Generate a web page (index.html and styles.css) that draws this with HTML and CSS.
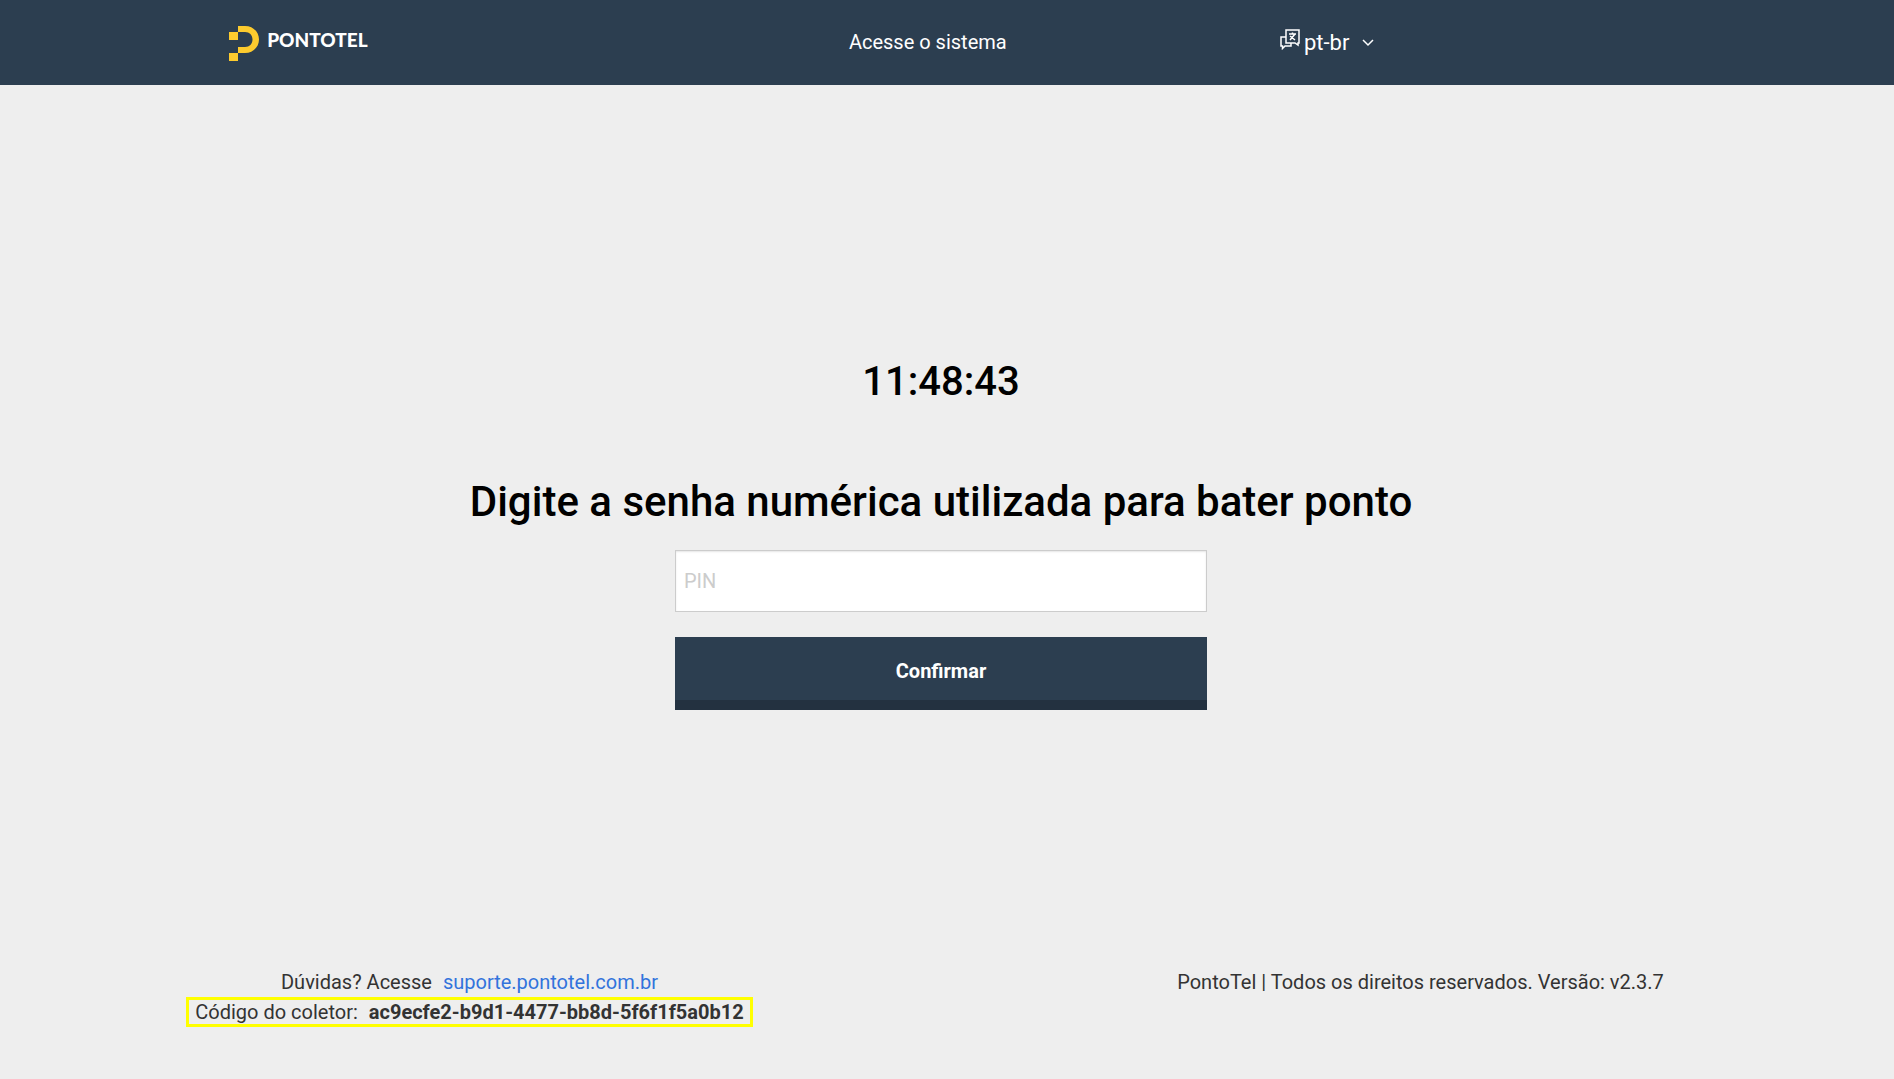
FILE: index.html
```html
<!DOCTYPE html>
<html lang="pt-br">
<head>
  <meta charset="UTF-8" />
  <meta name="viewport" content="width=device-width, initial-scale=1.0" />
  <title>PontoTel</title>
  <link rel="stylesheet" href="styles.css">
</head>
<body>
  <header class="header">
    <a href="#" class="brand" aria-label="Pontotel">
      <svg class="brand-mark" width="30" height="35" viewBox="0 0 30 35" fill="#fdcb2e" aria-hidden="true">
        <path d="M9 0h7c8 0 14 6 14 13.500S24 27 16 27H9v-6h7c4.500 0 7.500-3 7.500-7.500S20.500 6 16 6H9z" />
        <path d="M0 6h9v8H0zM0 27h9v8H0z" />
      </svg>
      <span class="brand-name">PONTOTEL</span>
    </a>
    <nav class="nav">
      <a href="#" class="nav-link">Acesse o sistema</a>
    </nav>
    <div class="language">
      <svg class="language-icon" width="20" height="21" viewBox="0 0 20 21" fill="none" stroke="#fff" stroke-width="1.500" aria-hidden="true">
        <path d="M6 1h13v13h-1v2l-3-2H6z" />
        <path d="M6 8H1v9h1.500v2.500L5 17h6v-3" />
        <path d="M9 5h7M12.500 3.500V5M10 11l5-6M10 7l5 4" />
      </svg>
      <select class="language-select" aria-label="Idioma">
        <option value="pt-br">pt-br</option>
        <option value="en">en</option>
        <option value="es">es</option>
      </select>
      <svg class="language-arrow" width="12" height="8" viewBox="0 0 12 8" fill="none" stroke="#fff" stroke-width="1.500" aria-hidden="true">
        <path d="M1 1l5 5 5-5" />
      </svg>
    </div>
  </header>
  <main class="main">
    <p class="clock">11:48:43</p>
    <form class="pin-form">
      <label for="pin" class="title">Digite a senha numérica utilizada para bater ponto</label>
      <input type="password" class="pin-input" id="pin" placeholder="PIN" inputmode="numeric" />
      <button type="submit" class="confirm-button">Confirmar</button>
    </form>
  </main>
  <footer class="footer">
    <div class="footer-col">
      <p>Dúvidas? Acesse <a href="#" class="support-link">suporte.pontotel.com.br</a></p>
      <p class="collector">Código do coletor: <strong class="collector-code">ac9ecfe2-b9d1-4477-bb8d-5f6f1f5a0b12</strong></p>
    </div>
    <div class="footer-col">
      <p>PontoTel | Todos os direitos reservados. Versão: v2.3.7</p>
    </div>
  </footer>
</body>
</html>
```
FILE: styles.css
```css
* {
  box-sizing: border-box;
}
body {
  margin: 0;
  min-height: 100vh;
  display: flex;
  flex-direction: column;
  background: #eee;
  color: #333;
  font-family: Roboto, "Liberation Sans", sans-serif;
  font-size: 20px;
  line-height: 29px;
}
p {
  margin: 0;
}
a {
  text-decoration: none;
}
.header {
  display: grid;
  grid-template-columns: 5fr 4fr 4fr;
  align-items: center;
  min-height: 85px;
  padding: 0 19.4% 0 12.1%;
  background: #2c3e50;
  color: #fff;
}
.brand {
  display: flex;
  align-items: center;
  gap: 8px;
  padding-top: 2px;
  color: #fff;
}
.brand-name {
  font-family: Lato, sans-serif;
  font-size: 19px;
  font-weight: 900;
  line-height: 24px;
  padding-bottom: 8px;
}
.nav {
  text-align: center;
}
.nav-link {
  color: #fff;
}
.language {
  display: flex;
  align-items: center;
  justify-content: center;
}
.language-icon {
  margin: 0 4px 6px 0;
}
.language-select {
  appearance: none;
  border: none;
  background: transparent;
  color: #fff;
  font: inherit;
  font-size: 22px;
  padding: 0;
  margin-right: 12px;
}
.language-select option {
  color: #333;
}
.main {
  flex: 1;
  display: flex;
  flex-direction: column;
  align-items: center;
  justify-content: center;
  padding: 10px 12px 0 0;
  color: #000;
}
.clock {
  font-size: 40px;
  font-weight: 500;
  line-height: 56px;
  margin-bottom: 64px;
}
.pin-form {
  display: flex;
  flex-direction: column;
  align-items: center;
}
.title {
  font-size: 42px;
  font-weight: 500;
  line-height: 56px;
  margin-bottom: 20px;
  text-align: center;
}
.pin-input {
  width: 532px;
  max-width: 100%;
  height: 62px;
  padding: 8px;
  border: 1px solid #ccc;
  background: #fff;
  box-shadow: inset 0 1px 2px rgba(0,0,0,0.1);
  font: inherit;
  margin-bottom: 25px;
}
.pin-input::placeholder {
  color: #ccc;
}
.confirm-button {
  width: 532px;
  max-width: 100%;
  height: 73px;
  padding-top: 8px;
  border: none;
  border-bottom: 10px solid #233140;
  background: #2c3e50;
  color: #fff;
  font: inherit;
  font-weight: bold;
  cursor: pointer;
}
.footer {
  display: grid;
  grid-template-columns: 1fr 1fr;
  padding-bottom: 52px;
}
.footer-col {
  display: flex;
  flex-direction: column;
  align-items: center;
}
.footer-col:first-child {
  padding-right: 8px;
}
.support-link {
  color: #3273dc;
  margin-left: 6px;
}
.collector {
  border: 3px solid #ff0;
  padding: 0 6px;
  line-height: 24px;
}
.collector-code {
  margin-left: 6px;
}
```
